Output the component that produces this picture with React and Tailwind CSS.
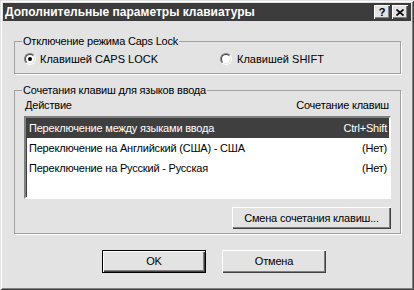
import React from 'react';

// Raised 3D edge used by classic buttons
const raised =
  'bg-[#e3e3e3] shadow-[inset_1px_1px_#ffffff,inset_-1px_-1px_#404040,inset_-2px_-2px_#808080]';

const Radio = ({ checked }) => (
  <span className="w-[12px] h-[12px] rounded-full border border-t-[#808080] border-l-[#808080] border-b-[#ffffff] border-r-[#ffffff] flex items-center justify-center shrink-0">
    <span className="w-[10px] h-[10px] rounded-full bg-white border border-t-[#404040] border-l-[#404040] border-b-[#e3e3e3] border-r-[#e3e3e3] flex items-center justify-center">
      {checked && <span className="w-[4px] h-[4px] rounded-full bg-black" />}
    </span>
  </span>
);

const GroupBox = ({ title, children, className = '' }) => (
  <fieldset
    className={`w-[387px] ml-[11px] border border-[#a0a0a0] shadow-[1px_1px_0_#ffffff] px-[9px] ${className}`}
  >
    <legend className="ml-[-2px] px-[1px] leading-[13px]">{title}</legend>
    {children}
  </fieldset>
);

const rows = [
  { action: 'Переключение между языками ввода', keys: 'Ctrl+Shift' },
  { action: 'Переключение на Английский (США) - США', keys: '(Нет)' },
  { action: 'Переключение на Русский - Русская', keys: '(Нет)' },
];

export default function App() {
  const selected = 0;

  return (
    <div className="w-[414px] h-[290px] bg-[#e3e3e3] p-[3px] flex flex-col text-[11px] tracking-[-0.2px] text-black font-['Liberation_Sans',Arial,sans-serif] shadow-[inset_1px_1px_#e3e3e3,inset_-1px_-1px_#404040,inset_2px_2px_#ffffff,inset_-2px_-2px_#808080]">
      {/* Title bar */}
      <div className="h-[18px] bg-[#3c3c3c] flex items-center pl-[2px] pr-[3px]">
        <span className="text-white font-bold text-[12px] tracking-normal leading-none">
          Дополнительные параметры клавиатуры
        </span>
        <div className="ml-auto flex gap-[2px]">
          <div className={`w-[16px] h-[14px] flex items-center justify-center font-bold text-[11px] leading-none ${raised}`}>
            ?
          </div>
          <div className={`w-[16px] h-[14px] flex items-center justify-center ${raised}`}>
            <svg width="8" height="7" viewBox="0 0 8 7">
              <path d="M0.5 0.5 L7.5 6.5 M7.5 0.5 L0.5 6.5" stroke="#000" strokeWidth="1.6" />
            </svg>
          </div>
        </div>
      </div>

      {/* Caps Lock group */}
      <GroupBox title="Отключение режима Caps Lock" className="mt-[14px] pb-[6px]">
        <div className="flex items-center h-[16px] mt-[3px]">
          <div className="flex items-center gap-[4px] w-[196px]">
            <Radio checked />
            <span className="tracking-normal">Клавишей CAPS LOCK</span>
          </div>
          <div className="flex items-center gap-[5px]">
            <Radio />
            <span className="tracking-normal">Клавишей SHIFT</span>
          </div>
        </div>
      </GroupBox>

      {/* Hotkeys group */}
      <GroupBox title="Сочетания клавиш для языков ввода" className="mt-[10px] pb-[4px]">
        <div className="flex justify-between h-[13px] leading-[13px] mt-[2px] pl-[1px] pr-[2px]">
          <span>Действие</span>
          <span>Сочетание клавиш</span>
        </div>
        <div className="mt-[4px] h-[83px] bg-white border-2 border-t-[#808080] border-l-[#808080] border-b-[#ffffff] border-r-[#ffffff] shadow-[inset_1px_1px_#404040]">
          {rows.map((row, i) => (
            <div
              key={i}
              className={`h-[20px] flex items-center justify-between pl-[3px] pr-[2px] ${
                i === selected ? 'bg-[#3f3f3f] text-white' : ''
              }`}
            >
              <span>{row.action}</span>
              <span>{row.keys}</span>
            </div>
          ))}
        </div>
        <div className="flex justify-end mt-[8px]">
          <button className={`w-[159px] h-[22px] flex items-center justify-center ${raised}`}>
            Смена сочетания клавиш...
          </button>
        </div>
      </GroupBox>

      {/* Dialog buttons */}
      <div className="flex gap-[16px] pl-[99px] mt-[16px]">
        <button className="w-[104px] h-[23px] border border-black">
          <span className={`w-full h-full flex items-center justify-center ${raised}`}>OK</span>
        </button>
        <button className={`w-[104px] h-[23px] flex items-center justify-center ${raised}`}>
          Отмена
        </button>
      </div>
    </div>
  );
}
